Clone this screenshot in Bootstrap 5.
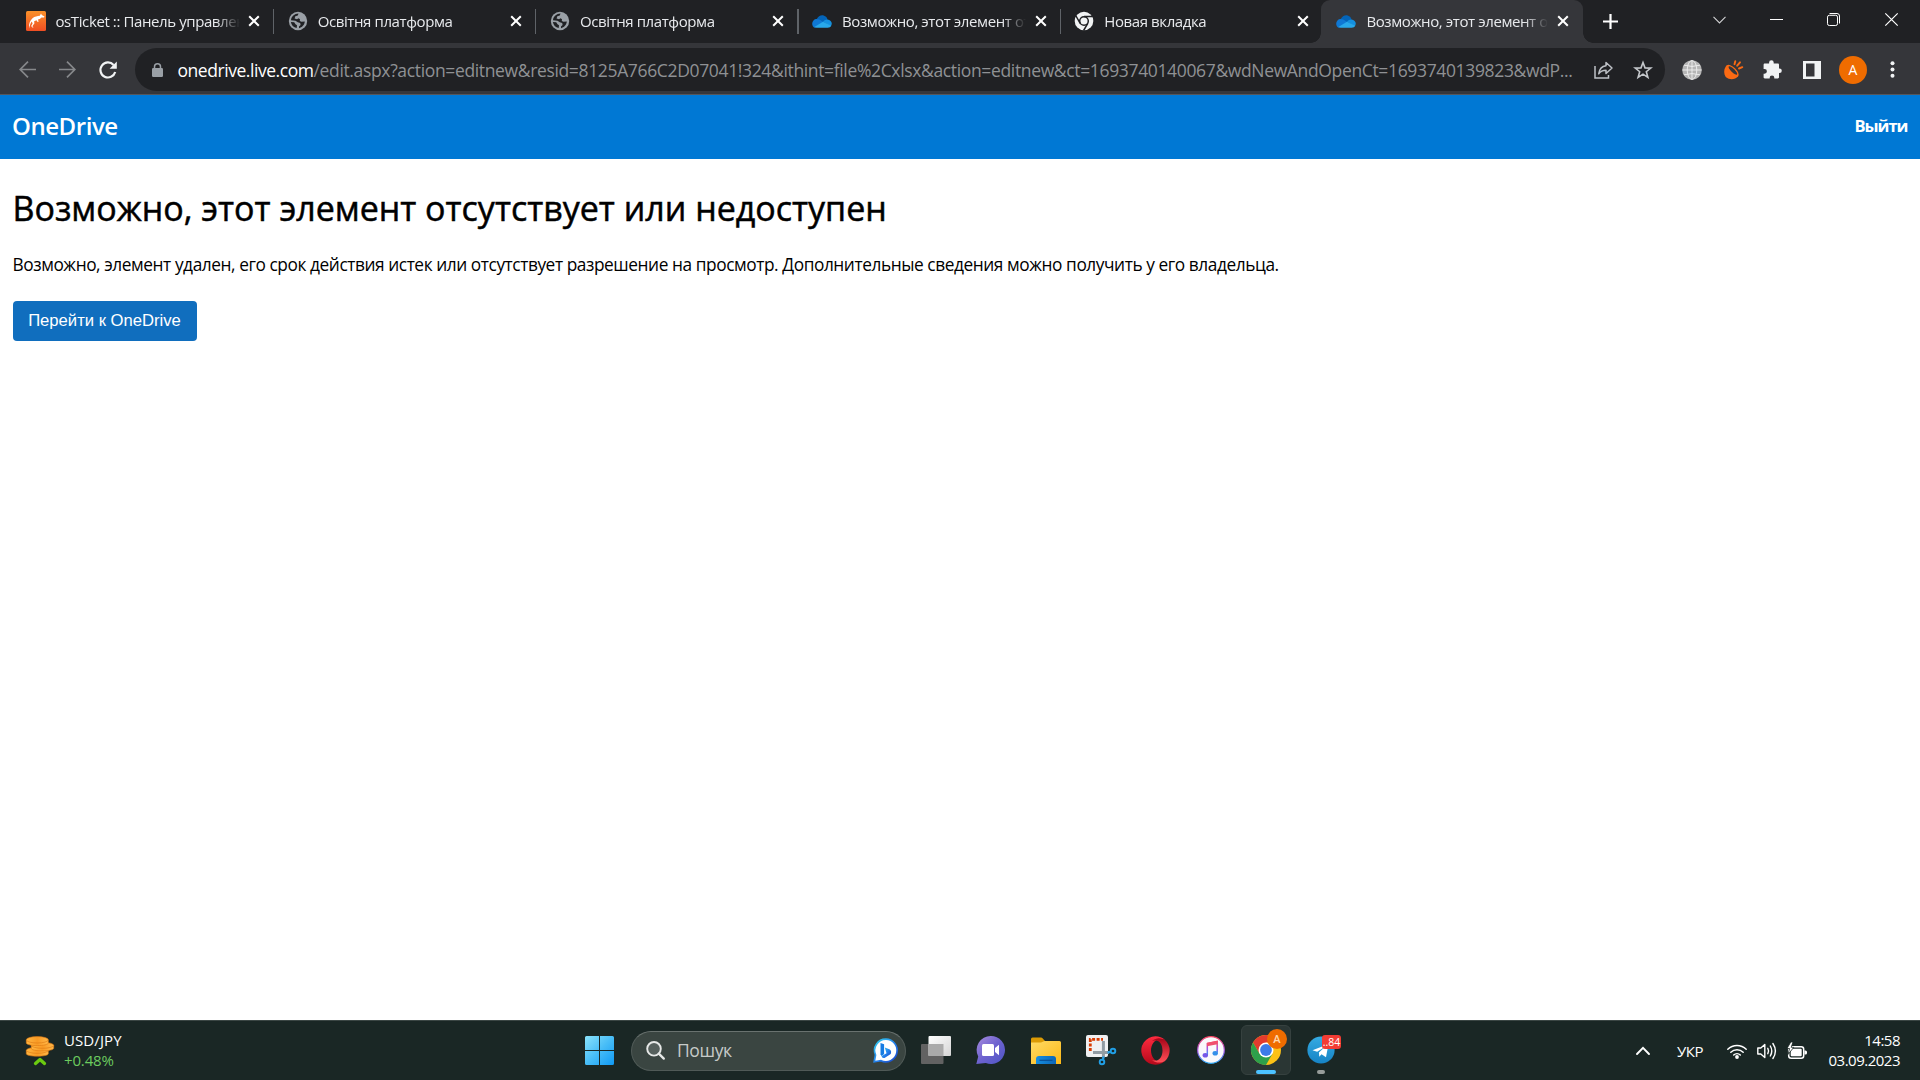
<!DOCTYPE html>
<html lang="ru">
<head>
<meta charset="utf-8">
<title>OneDrive</title>
<link href="https://cdn.jsdelivr.net/npm/bootstrap@5.3.0/dist/css/bootstrap.min.css" rel="stylesheet">
<style>
body{width:1920px;height:1080px;overflow:hidden;background:#fff;color:#000;font-family:"Open Sans","Noto Sans",sans-serif}
svg{display:block;flex:none;overflow:visible}
.strip{height:43px;background:#202124;padding-left:12px}
.btab{width:262.2px;height:43px;padding:0 0 1px 13.5px;color:#e8eaed;font-size:15px;flex:none}
.btab .ttl{width:184px;margin-left:10px;overflow:hidden;white-space:nowrap;letter-spacing:-.4px;line-height:24px;padding-bottom:1px;-webkit-mask-image:linear-gradient(90deg,#000 87%,transparent 100%);mask-image:linear-gradient(90deg,#000 87%,transparent 100%)}
.btab .xx{margin-left:8.5px}
.vsep{width:1.2px;height:25px;background:#5f6368;margin-left:auto}
.btab.on{background:#35363a;border-radius:9px 9px 0 0;position:relative;width:262px;margin-left:-1.5px;padding-left:15px}
.btab.on .ttl{width:182px}
.btab.on:before,.btab.on:after{content:"";position:absolute;bottom:0;width:10px;height:10px}
.btab.on:before{left:-10px;background:radial-gradient(circle at 0 0,transparent 9.5px,#35363a 10px)}
.btab.on:after{right:-10px;background:radial-gradient(circle at 100% 0,transparent 9.5px,#35363a 10px)}
.plus{padding:0 0 1px 20px}
.wctl{width:57.4px;display:flex;justify-content:center}
.tools{height:52px;background:#35363a;border-bottom:1px solid #55565a;padding:5px 0 3px 19px}
.omni{width:1530px;height:43px;border-radius:22px;background:#202124;padding:0 13.5px 0 17px;margin-left:18px}
.urlt{font-size:17.5px;color:#8f9194;white-space:nowrap;width:1416px;margin-left:14.5px;line-height:30px;letter-spacing:-.35px}
.urlt b{font-weight:400;color:#fff;letter-spacing:-.45px}
.ava{width:28px;height:28px;border-radius:50%;background:#ef6c00;color:#fff;font-size:14px;line-height:28px}
.odbar{height:64px;background:#0078d4;color:#fff;padding:0 12.5px 2px 12px}
.brandt{font-size:24px;font-weight:600;letter-spacing:-.45px;line-height:30px}
.exitt{font-size:16.5px;font-weight:700;letter-spacing:-1px}
.main-area{height:861px;padding:27px 12.5px 0}
.headt{font-size:34px;font-weight:500;line-height:44px;letter-spacing:0;margin:0;white-space:nowrap;-webkit-text-stroke:.5px #000}
.para{font-size:17.3px;line-height:26px;margin:22px 0 23px;letter-spacing:-.425px;white-space:nowrap}
.gobtn{width:184px;height:40px;border-radius:4px;background:#106ebe;color:#fff;border:0;padding:0;font:16.65px "Liberation Sans",sans-serif;white-space:nowrap}
.tbar{height:60px;background:#1a2725;border-top:1px solid #3b4644;color:#fff}
.wid{width:572px;padding-left:26px}
.two{font-size:15px;line-height:20px;letter-spacing:-.5px;padding-bottom:2px}
.cell{width:55px;height:59px;padding-bottom:1px;display:flex;align-items:center;justify-content:center;position:relative;flex:none}
.srch{width:275px;height:40px;border-radius:20px;background:#3a4541;border:1px solid #505a57;border-top-color:#69726f;padding:0 7px 0 14px;margin:0 2px 0 4px;color:#c6cac8;font-size:17.5px;letter-spacing:-.4px;flex:none}
.tile{position:absolute;left:2.5px;top:4px;width:50px;height:50px;border-radius:6px;background:#2a3634;border:1px solid #36413f}
.ind{position:absolute;height:4px;border-radius:2px;top:49px}
.cbad{position:absolute;left:29px;top:8px;width:20px;height:20px;border-radius:50%;background:#ef6c00;color:#ffd9b0;font-size:11px;line-height:20px;text-align:center;font-weight:600}
.tbad{position:absolute;left:29px;top:14px;width:19px;height:14px;border-radius:3px;background:#f23c34;font-size:10.5px;line-height:14px;text-align:center}
</style>
<script src="https://cdn.jsdelivr.net/npm/bootstrap@5.3.0/dist/js/bootstrap.bundle.min.js"></script>
</head>
<body>
<svg width="0" height="0" class="position-absolute">
<defs>
<symbol id="cls" viewBox="0 0 12 12"><path d="M1.2 1.2 10.8 10.8M10.8 1.2 1.2 10.8" stroke="#fff" stroke-width="2"/></symbol>
<symbol id="glb" viewBox="0 0 20 20"><circle cx="10" cy="10" r="9.200" fill="#9aa0a6"/><path d="M10.500 2.600 9.800 4.500 7.300 5.300 6.600 7.500 9 8.200 10.500 7.300 12 8.300 11.800 10 13.500 10.800 16.800 10.600C16.500 14 14 16.600 11 17.200L11 15.400 12.600 14 12.200 12 9.800 11.300 7.500 9.800 3 9.300C3.300 5.600 6.500 2.600 10.500 2.600zM2.900 11 6.200 11.300 7.500 13.300 9 14.300 8.700 17C5.500 16.400 3.200 14 2.900 11z" fill="#202124"/></symbol>
<symbol id="cld" viewBox="0 0 21 15"><path d="M5 5C6.500 1.600 9.600.4 12.300 1.200c2.300.7 3.600 2.300 4 4.300L12 9z" fill="#0364b8"/><path d="M4.800 4.800c1.500 0 2.700.4 3.800 1.200l5.200 3.500L3 14C1.200 13.400.2 11.800.2 9.800c0-2.800 2-5 4.600-5z" fill="#0f78d4"/><path d="M11.500 8C13 5.800 14.600 5.200 16.300 5.300c2.700.2 4.500 2.200 4.500 4.800l-1 2.500z" fill="#1490df"/><path d="M11.500 7.800 2.500 13.300c.8.500 1.500.7 2.500.7h11.500c1.700 0 3-.8 3.800-2z" fill="#28a8ea"/></symbol>
<linearGradient id="ost" x2="0" y2="1"><stop stop-color="#f9912a"/><stop offset="1" stop-color="#ef4e23"/></linearGradient>
<linearGradient id="wn" x2="1" y2="1"><stop stop-color="#8be3fb"/><stop offset=".5" stop-color="#48bdf7"/><stop offset="1" stop-color="#109af5"/></linearGradient>
<linearGradient id="coin" x2="1"><stop stop-color="#ffb641"/><stop offset=".5" stop-color="#f99a24"/><stop offset="1" stop-color="#ffb748"/></linearGradient>
<linearGradient id="bng" x2="1" y2="1"><stop stop-color="#35d1ee"/><stop offset=".5" stop-color="#2585ed"/><stop offset="1" stop-color="#1843c8"/></linearGradient>
<linearGradient id="tv" x2="1" y2="1"><stop stop-color="#fff"/><stop offset="1" stop-color="#d5d5d5"/></linearGradient>
<linearGradient id="cht" x2="1" y2="1"><stop stop-color="#a98cde"/><stop offset=".5" stop-color="#6d62cf"/><stop offset="1" stop-color="#4d55c5"/></linearGradient>
<linearGradient id="fld" x2="1" y2="1"><stop stop-color="#ffdb65"/><stop offset="1" stop-color="#fdb917"/></linearGradient>
<linearGradient id="blu" x2="1"><stop stop-color="#178fe0"/><stop offset="1" stop-color="#0c66b8"/></linearGradient>
<linearGradient id="opr" x2="0" y2="1"><stop stop-color="#ff2b3f"/><stop offset="1" stop-color="#b5091b"/></linearGradient>
<linearGradient id="op2" x2="0" y2="1"><stop stop-color="#a60519"/><stop offset="1" stop-color="#ff5058"/></linearGradient>
<linearGradient id="mus" x2="0" y2="1"><stop stop-color="#ff4867"/><stop offset=".55" stop-color="#9e55e8"/><stop offset="1" stop-color="#26a8f4"/></linearGradient>
<linearGradient id="tlg" x2="0" y2="1"><stop stop-color="#35abe2"/><stop offset="1" stop-color="#1683c5"/></linearGradient>
</defs></svg>

<header class="strip d-flex">
 <div class="btab d-flex align-items-center">
  <svg width="20" height="20" viewBox="0 0 20 20"><rect width="20" height="20" rx="1.500" fill="url(#ost)"/><path d="M3 17.500C2.600 13 4 9.500 6.500 7.200 8.700 5.300 11.500 5.200 13.800 4.800L15 2.500 15.800 4 18.500 5.600 18 6.600 15.500 6.500C14.500 7.800 13.200 8.300 12 8.600L12.600 10.800 11.700 11 10.400 9.200 8 10.500 8.500 12.300 6.300 15.300 7.600 16.300 6.300 16.500 5.200 15 6.600 12.500 5.800 10.500C4.500 12 3.800 14.500 3 17.500z" fill="#fff"/></svg>
  <span class="ttl">osTicket :: Панель управлен</span><svg class="xx" width="12" height="12"><use href="#cls"/></svg><i class="vsep"></i>
 </div>
 <div class="btab d-flex align-items-center"><svg width="20" height="20"><use href="#glb"/></svg><span class="ttl">Освітня платформа</span><svg class="xx" width="12" height="12"><use href="#cls"/></svg><i class="vsep"></i></div>
 <div class="btab d-flex align-items-center"><svg width="20" height="20"><use href="#glb"/></svg><span class="ttl">Освітня платформа</span><svg class="xx" width="12" height="12"><use href="#cls"/></svg><i class="vsep"></i></div>
 <div class="btab d-flex align-items-center"><svg width="20" height="15"><use href="#cld"/></svg><span class="ttl">Возможно, этот элемент от</span><svg class="xx" width="12" height="12"><use href="#cls"/></svg><i class="vsep"></i></div>
 <div class="btab d-flex align-items-center">
  <svg width="20" height="20" viewBox="0 0 20 20"><circle cx="10" cy="10" r="9.300" fill="#f1f3f4"/><circle cx="10" cy="10" r="4.300" fill="none" stroke="#202124" stroke-width="1.500"/><path d="M10 5.500h8.500M13.800 12.300 9.600 19.500M6.200 12.300 2 5" stroke="#202124" stroke-width="1.500"/></svg>
  <span class="ttl">Новая вкладка</span><svg class="xx" width="12" height="12"><use href="#cls"/></svg>
 </div>
 <div class="btab on d-flex align-items-center"><svg width="20" height="15"><use href="#cld"/></svg><span class="ttl">Возможно, этот элемент от</span><svg class="xx" width="12" height="12"><use href="#cls"/></svg></div>
 <div class="plus d-flex align-items-center"><svg width="15" height="15" viewBox="0 0 15 15"><path d="M7.500 0v15M0 7.500h15" stroke="#fff" stroke-width="2.200"/></svg></div>
 <div class="d-flex align-items-center ms-auto pb-1 h-100">
  <span class="wctl"><svg width="13" height="8" viewBox="0 0 13 8"><path d="M.5.800 6.500 7 12.500.800" fill="none" stroke="#d0d1d2" stroke-width="1.100"/></svg></span>
  <span class="wctl"><svg width="13" height="2"><path d="M0 .5h13" stroke="#fff" stroke-width="1"/></svg></span>
  <span class="wctl"><svg width="13" height="13" viewBox="0 0 13 13"><rect x=".5" y="2.300" width="10" height="10.200" rx="1.800" fill="none" stroke="#fff"/><path d="M2.500.500H10a2.500 2.500 0 0 1 2.500 2.500v7.500" fill="none" stroke="#fff"/></svg></span>
  <span class="wctl"><svg width="13" height="13" viewBox="0 0 13 13"><path d="M.3.300 12.700 12.700M12.700.300.3 12.700" stroke="#fff" stroke-width="1.200"/></svg></span>
 </div>
</header>

<nav class="tools d-flex align-items-center">
 <svg width="17" height="17" viewBox="0 0 17 17"><path d="M17 8.500H1.500M9 .700 1.200 8.500 9 16.300" fill="none" stroke="#86888b" stroke-width="1.700"/></svg>
 <svg style="margin-left:23px" width="17" height="17" viewBox="0 0 17 17"><path d="M0 8.500h15.500M8 .700l7.800 7.800L8 16.300" fill="none" stroke="#86888b" stroke-width="1.700"/></svg>
 <svg style="margin-left:23px" width="18" height="18" viewBox="0 0 18 18"><path d="M14.600 4A7.500 7.500 0 1 0 16.200 11" fill="none" stroke="#f1f3f4" stroke-width="2.200"/><path d="M17.800.500v7.200h-7.200z" fill="#f1f3f4"/></svg>
 <div class="omni d-flex align-items-center">
  <svg width="11" height="14" viewBox="0 0 11 14"><rect y="5" width="11" height="9" rx="1.200" fill="#9aa0a6"/><path d="M2.500 6V3.700a3 3 0 0 1 6 0V6" fill="none" stroke="#9aa0a6" stroke-width="1.500"/></svg>
  <div class="urlt"><b>onedrive.live.com</b>/edit.aspx?action=editnew&amp;resid=8125A766C2D07041!324&amp;ithint=file%2Cxlsx&amp;action=editnew&amp;ct=1693740140067&amp;wdNewAndOpenCt=1693740139823&amp;wdP...</div>
  <svg width="19" height="18" viewBox="0 0 19 18"><path d="M1 5v12h13.500v-3" fill="none" stroke="#bdc1c6" stroke-width="1.500"/><path d="M12 1.500 18 7l-6 5.500V9.300c-3.500 0-5.500 1-7.300 3.500C5.300 8.500 8 5.200 12 4.700z" fill="none" stroke="#bdc1c6" stroke-width="1.500" stroke-linejoin="round"/></svg>
  <svg class="ms-auto" width="18" height="18" viewBox="0 0 18 18"><path d="m9 1.500 2 5.400 5.800.2-4.500 3.600 1.600 5.600L9 13.100l-4.900 3.200 1.600-5.600L1.200 7.100l5.800-.2z" fill="none" stroke="#c4c7cb" stroke-width="1.600"/></svg>
 </div>
 <div class="d-flex align-items-center" style="margin-left:17px">
  <svg width="20" height="20" viewBox="0 0 20 20"><circle cx="10" cy="10" r="9.800" fill="#b5b5b5"/><g fill="none" stroke="#f0f0f0" stroke-width=".9"><ellipse cx="10" cy="10" rx="4.800" ry="9.500"/><path d="M10 .500v19M.5 10h19M2 5.200q8 2.500 16 0M2 14.800q8-2.500 16 0"/></g></svg>
  <svg style="margin-left:22px" width="19" height="20" viewBox="0 0 19 20"><path d="M3 5C-.6 8.500-.5 14 2 17.200c3.500 2.800 9 2.800 12.300-1.200z" fill="#fb6a13"/><ellipse cx="8.500" cy="10.800" rx="7.800" ry="3.600" transform="rotate(44 8.500 10.800)" fill="#fb6a13"/><ellipse cx="8.900" cy="10.500" rx="5.800" ry="1.800" transform="rotate(44 8.900 10.500)" fill="#35363a"/><path d="m10.500 4.200.8-3M13.200 5.700 16 2.300M15 8.500l3.300-1.300" stroke="#fb6a13" stroke-width="1.900" stroke-linecap="round"/></svg>
  <svg style="margin-left:20px" width="19" height="19" viewBox="0 0 19 19"><path d="M1.800 3.500h4.300V2.600a2.300 2.300 0 0 1 4.600 0v.9h4.100c.7 0 1.200.5 1.200 1.200v3.800h.5a2.300 2.300 0 0 1 0 4.600H16v4.200c0 .7-.5 1.200-1.200 1.200h-3.500v-.8a2.300 2.300 0 0 0-4.600 0v.8H1.800c-.7 0-1.200-.5-1.200-1.200v-3.600h.9a2.400 2.400 0 0 0 0-4.800H.6V4.700c0-.7.5-1.200 1.200-1.200z" fill="#f1f3f4"/></svg>
  <svg style="margin-left:21px" width="18" height="18"><rect width="18" height="18" fill="#f1f3f4"/><rect x="3" y="2.500" width="8.500" height="13" fill="#35363a"/></svg>
  <span class="ava text-center" style="margin-left:18px">A</span>
  <svg style="margin-left:23px" width="5" height="17"><circle cx="2.500" cy="2.200" r="2" fill="#f1f3f4"/><circle cx="2.500" cy="8.500" r="2" fill="#f1f3f4"/><circle cx="2.500" cy="14.800" r="2" fill="#f1f3f4"/></svg>
 </div>
</nav>

<div class="odbar d-flex align-items-center justify-content-between"><span class="brandt">OneDrive</span><span class="exitt">Выйти</span></div>

<main class="main-area">
 <h1 class="headt"><span>Возможно, этот элемент отсутствует или недоступен</span></h1>
 <p class="para"><span>Возможно, элемент удален, его срок действия истек или отсутствует разрешение на просмотр. Дополнительные сведения можно получить у его владельца.</span></p>
 <button class="btn gobtn">Перейти к OneDrive</button>
</main>

<footer class="tbar d-flex align-items-center">
 <div class="wid d-flex align-items-center">
  <svg width="28" height="30" viewBox="0 0 28 30"><g fill="url(#coin)" stroke="#dc7712" stroke-width=".6"><path d="M.3 14.500v3.200c0 1.500 5 2.500 11 2.500s11-1 11-2.500v-3.200z"/><ellipse cx="11.300" cy="14.300" rx="11" ry="3"/><path d="M5.300 9.300v3c0 1.500 5 2.600 11.200 2.600s11.200-1.100 11.200-2.600v-3z"/><ellipse cx="16.500" cy="9.300" rx="11.200" ry="3"/><path d="M.3 4v3c0 1.500 5 2.600 11 2.600s11-1.100 11-2.600V4z"/><ellipse cx="11.300" cy="3.800" rx="11" ry="3.200"/></g><path d="m9.500 27.500 4.500-4 4.500 4" fill="none" stroke="#6bcb10" stroke-width="3.300" stroke-linecap="round" stroke-linejoin="round"/></svg>
  <div class="two" style="margin-left:10px"><div style="letter-spacing:.1px">USD/JPY</div><div style="color:#6ccb5f;letter-spacing:-.15px">+0.48%</div></div>
 </div>
 <div class="cell"><svg width="29" height="29"><path d="M1.500 0H14v14H0V1.500Q0 0 1.500 0zM15 0h12.500Q29 0 29 1.500V14H15zM0 15h14v14H1.500Q0 29 0 27.500zM15 15h14v12.500q0 1.500-1.500 1.500H15z" fill="url(#wn)"/></svg></div>
 <div class="srch d-flex align-items-center">
  <svg width="19" height="19" viewBox="0 0 19 19"><circle cx="8" cy="7.800" r="6.800" fill="#56605d" stroke="#e6e8e7" stroke-width="1.900"/><path d="m12.800 12.600 5 5" stroke="#e6e8e7" stroke-width="2.300" stroke-linecap="round"/></svg>
  <span style="margin-left:12px">Пошук</span>
  <svg class="ms-auto" width="25" height="25" viewBox="0 0 25 25"><path d="M13 1.200A11.300 11.300 0 1 1 8 22.700L1.200 23.800 2.500 17A11.300 11.300 0 0 1 13 1.200z" fill="#fff" stroke="url(#bng)" stroke-width="1.700"/><path d="m7.500 5 3.600 1.300v9.700L8.600 18l-1.100-1.500z" fill="#167ce3"/><path d="m11.800 9.500 4.600 1.700c2 1 2 3 1.300 4.700l-6.200 4c-1.300.6-2.900-.3-2.900-1.800l4.900-2.800z" fill="url(#bng)"/></svg>
 </div>
 <div class="cell"><svg width="30" height="28"><rect y="8" width="22.500" height="20" rx="1" fill="#626262"/><rect x="7.500" width="22.500" height="20" rx="1" fill="url(#tv)"/><path d="M7.500 8h15v12h-15z" fill="#aaa"/></svg></div>
 <div class="cell"><svg width="29" height="28" viewBox="0 0 29 28"><path d="M14.800 0a14 14 0 1 1-5 27L.3 28l1.900-7.500A14 14 0 0 1 14.800 0z" fill="url(#cht)"/><rect x="6" y="8" width="12" height="12" rx="1.500" fill="#fff"/><path d="m19 12 4-3.300v10.600L19 16z" fill="#fff"/></svg></div>
 <div class="cell"><svg width="30" height="27" viewBox="0 0 30 27"><path d="M0 10V2Q0 .500 1.500.500H10q1 0 1.500.7L14 4v6z" fill="#dc9b05"/><path d="M0 5.500h10L13.500 4h15Q30 4 30 5.500V27H0z" fill="url(#fld)"/><path d="M5 27v-5q0-3 3-3h14q3 0 3 3v5z" fill="url(#blu)"/><path d="M8.500 23.300h13" stroke="#094e96" stroke-width="1.200"/></svg></div>
 <div class="cell"><svg width="30" height="30" viewBox="0 0 30 30"><rect width="22" height="22" rx="2" fill="#f0f1f2"/><path d="M4.300 16V4.300H17" fill="none" stroke="#d83b01" stroke-width="2.800" stroke-dasharray="3 1.500"/><path d="M17.400 6v16.500M7 17.600h16" stroke="#929ca3" stroke-width="3"/><circle cx="27" cy="16" r="2.300" fill="none" stroke="#219fe6" stroke-width="1.900"/><circle cx="16" cy="27" r="2.300" fill="none" stroke="#219fe6" stroke-width="1.900"/><path d="m17 24.500.6-3M21.500 17.600l3-.8" stroke="#219fe6" stroke-width="2.300"/></svg></div>
 <div class="cell"><svg width="29" height="29" viewBox="0 0 29 29"><path d="M14.500.300a14.200 14.200 0 0 1 9.500 3.700C15 0 10 8 10 14.500S15 29 24 25A14.200 14.200 0 1 1 14.500.300z" fill="url(#opr)"/><path d="M11 5c5-4 9-3 13-1a14.200 14.200 0 0 1 0 21c-4 2-8.500 2.500-13-1 7 2.500 10.500-3 10.500-9.500S18 2.500 11 5z" fill="url(#op2)"/></svg></div>
 <div class="cell"><svg width="28" height="28" viewBox="0 0 28 28"><circle cx="14" cy="14" r="13.300" fill="#faf9fc" stroke="url(#mus)" stroke-width="1.200"/><path d="M10.300 19V7.500L20.200 5.500V16.500" fill="none" stroke="url(#mus)" stroke-width="1.500"/><path d="m10 6.700 10.500-2v3.600L10 10.300z" fill="#f0506f"/><ellipse cx="8.300" cy="19.300" rx="2.700" ry="2.300" fill="#7658e8"/><ellipse cx="18.200" cy="17.200" rx="2.700" ry="2.300" fill="#338fea"/></svg></div>
 <div class="cell"><i class="tile"></i>
  <svg class="position-relative" width="30" height="30" viewBox="0 0 30 30"><circle cx="15" cy="15" r="15" fill="#fbc116"/><path d="M15 0A15 15 0 0 0 2 7.500l6.500 11.300L15 15V7.500h13A15 15 0 0 0 15 0z" fill="#e33b2e"/><path d="M2 7.500A15 15 0 0 0 15 30l6.500-11.300L8.500 18.800z" fill="#2da04b"/><circle cx="15" cy="15" r="7.500" fill="#fff"/><circle cx="15" cy="15" r="5.900" fill="#3c7be8"/></svg>
  <span class="cbad">A</span><i class="ind" style="left:17.5px;width:20px;background:#4cc2ff"></i></div>
 <div class="cell"><svg width="28" height="28" viewBox="0 0 28 28"><circle cx="14" cy="14" r="13.600" fill="url(#tlg)"/><path d="M5.500 14.300 21.500 8 19 21.300l-4.500-3-2.200 2.500-.4-4.300 6.500-5.900-8.200 5.200z" fill="#fff"/></svg>
  <span class="tbad">..84</span><i class="ind" style="left:23.500px;width:8px;background:#969c9a"></i></div>
 <div class="d-flex align-items-center ms-auto" style="padding-right:20px">
  <svg width="14" height="9" viewBox="0 0 14 9"><path d="M1 8 7 1.800 13 8" fill="none" stroke="#fff" stroke-width="1.900" stroke-linecap="round"/></svg>
  <span class="two" style="margin-left:27px;width:50px;padding:0">УКР</span>
  <svg width="20" height="16" viewBox="0 0 20 16"><g fill="none" stroke="#fff" stroke-width="1.500" stroke-linecap="round"><path d="M.8 6.200a13 13 0 0 1 18.400 0M3.800 9.200a8.800 8.800 0 0 1 12.400 0M6.700 12a4.700 4.700 0 0 1 6.600 0"/></g><circle cx="10" cy="14" r="1.900" fill="#fff"/></svg>
  <svg style="margin-left:10px" width="20" height="18" viewBox="0 0 20 18"><g fill="none" stroke="#fff" stroke-width="1.400" stroke-linejoin="round" stroke-linecap="round"><path d="M.8 6v6h3l4 3.500v-13L3.800 6z"/><path d="M10.800 6.300q1.600 2.700 0 5.400M13.300 4q3 5 0 10M15.900 1.500q5 7.500 0 15"/></g></svg>
  <svg style="margin-left:10px" width="20" height="18" viewBox="0 0 20 18"><rect x="1.700" y="4.700" width="15" height="11.500" rx="2.500" fill="none" stroke="#fff" stroke-width="1.500"/><rect x="3.700" y="6.700" width="11" height="7.500" rx="1" fill="#fff"/><path d="M17.500 8.500h1a1.500 1.500 0 0 1 1.500 1.500v1a1.500 1.500 0 0 1-1.500 1.500h-1z" fill="#fff"/><path d="M3.800 0 0 6.500h2.500L1 12.500 6.800 5.300H4.200L6 0z" fill="#fff" stroke="#1a2725" stroke-width=".8"/></svg>
  <div class="two text-end" style="width:93px"><div>14:58</div><div>03.09.2023</div></div>
 </div>
</footer>
</body>
</html>
